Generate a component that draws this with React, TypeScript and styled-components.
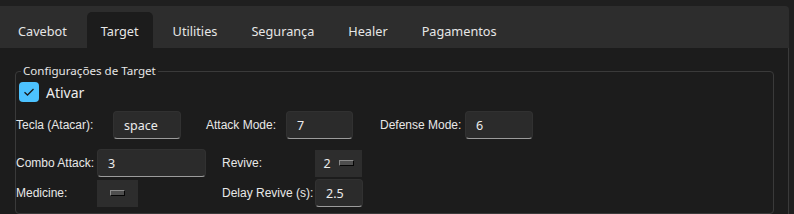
import * as React from 'react';
import styled, { createGlobalStyle } from 'styled-components';

const GlobalStyle = createGlobalStyle`
  html, body {
    margin: 0;
    padding: 0;
    background: #1f1f1f;
    overflow: hidden;
  }
`;

const Window = styled.div`
  width: 789px;
  height: 214px;
  padding-top: 6px;
  box-sizing: border-box;
  display: flex;
  flex-direction: column;
`;

const TabBar = styled.div`
  height: 42px;
  background: #2d2d2d;
  border-top-right-radius: 4px;
  display: flex;
  align-items: flex-end;
  padding-left: 4px;
`;

const Tab = styled.div<{ $active?: boolean }>`
  height: 36px;
  padding: 2px 14px 0;
  margin-right: 6px;
  box-sizing: border-box;
  display: flex;
  align-items: center;
  font-family: 'Noto Sans', sans-serif;
  font-size: 12.7px;
  color: #e6e6e6;
  background: ${p => (p.$active ? '#1c1c1c' : 'transparent')};
  border-radius: 5px 5px 0 0;
`;

const Pane = styled.div`
  flex: 1;
  background: #1c1c1c;
  border-right: 1px solid #3a3a3a;
  padding: 16px 14px 0 15px;
  box-sizing: border-box;
`;

const Group = styled.fieldset`
  margin: 0;
  padding: 0 0 4px;
  min-inline-size: 0;
  border: 1px solid #3a3a3a;
  border-radius: 4px;
  height: 150px;
  box-sizing: border-box;
  display: flex;
  flex-direction: column;
`;

const Title = styled.legend`
  margin-left: 5px;
  padding: 0 2px;
  font-family: 'Noto Sans', sans-serif;
  font-size: 11.6px;
  line-height: 14px;
  color: #e6e6e6;
`;

const CheckRow = styled.div`
  display: flex;
  align-items: center;
  gap: 7px;
  margin: 4px 0 0 3px;
  font-family: 'Noto Sans', sans-serif;
  font-size: 14px;
  color: #ececec;
`;

const CheckBox = styled.div`
  width: 20px;
  height: 20px;
  border-radius: 4px;
  background: #4cc2ff;
  display: flex;
  align-items: center;
  justify-content: center;
`;

const Row = styled.div<{ $top: number }>`
  display: flex;
  align-items: center;
  margin-top: ${p => p.$top}px;
`;

const Label = styled.div<{ $w: number }>`
  width: ${p => p.$w}px;
  flex-shrink: 0;
  white-space: nowrap;
  font-family: 'Liberation Sans', Arial, sans-serif;
  font-size: 12px;
  color: #e8e8e8;
`;

const Input = styled.div<{ $w: number }>`
  width: ${p => p.$w}px;
  height: 28px;
  flex-shrink: 0;
  box-sizing: border-box;
  background: #2b2b2b;
  border: 1px solid #313131;
  border-bottom: 1px solid #9c9c9c;
  border-radius: 4px;
  padding-left: 10px;
  display: flex;
  align-items: center;
  font-family: 'Noto Sans', sans-serif;
  font-size: 12.5px;
  color: #ececec;
`;

const Spin = styled.div<{ $w: number }>`
  width: ${p => p.$w}px;
  height: 27px;
  flex-shrink: 0;
  box-sizing: border-box;
  background: #2d2d2d;
  display: flex;
  align-items: center;
  justify-content: center;
  gap: 8px;
  font-family: 'Noto Sans', sans-serif;
  font-size: 12.5px;
  color: #ececec;
`;

const SpinKnob = styled.div`
  width: 15px;
  height: 6px;
  box-sizing: border-box;
  background: #4e4e4e;
  border: 1px solid;
  border-color: #8a8a8a #050505 #050505 #8a8a8a;
`;

const Gap = styled.div<{ $w: number }>`
  width: ${p => p.$w}px;
  flex-shrink: 0;
`;

const tabs = ['Cavebot', 'Target', 'Utilities', 'Segurança', 'Healer', 'Pagamentos'];

export default function App() {
  return (
    <Window>
      <GlobalStyle />
      <TabBar>
        {tabs.map(t => (
          <Tab key={t} $active={t === 'Target'}>
            {t}
          </Tab>
        ))}
      </TabBar>
      <Pane>
        <Group>
          <Title>Configurações de Target</Title>
          <CheckRow>
            <CheckBox>
              <svg width="12" height="10" viewBox="0 0 12 10">
                <path d="M1.5 5.2 L4.5 8 L10.5 2" fill="none" stroke="#1a1a1a" strokeWidth="1.3" />
              </svg>
            </CheckBox>
            Ativar
          </CheckRow>
          <Row $top={9}>
            <Label $w={97}>Tecla (Atacar):</Label>
            <Input $w={68}>space</Input>
            <Gap $w={25} />
            <Label $w={80}>Attack Mode:</Label>
            <Input $w={67}>7</Input>
            <Gap $w={27} />
            <Label $w={85}>Defense Mode:</Label>
            <Input $w={68}>6</Input>
          </Row>
          <Row $top={10}>
            <Label $w={81}>Combo Attack:</Label>
            <Input $w={109}>3</Input>
            <Gap $w={16} />
            <Label $w={93}>Revive:</Label>
            <Spin $w={47}>
              2
              <SpinKnob />
            </Spin>
          </Row>
          <Row $top={2}>
            <Label $w={81}>Medicine:</Label>
            <Spin $w={41}>
              <SpinKnob />
            </Spin>
            <Gap $w={84} />
            <Label $w={93}>Delay Revive (s):</Label>
            <Input $w={48}>2.5</Input>
          </Row>
        </Group>
      </Pane>
    </Window>
  );
}
